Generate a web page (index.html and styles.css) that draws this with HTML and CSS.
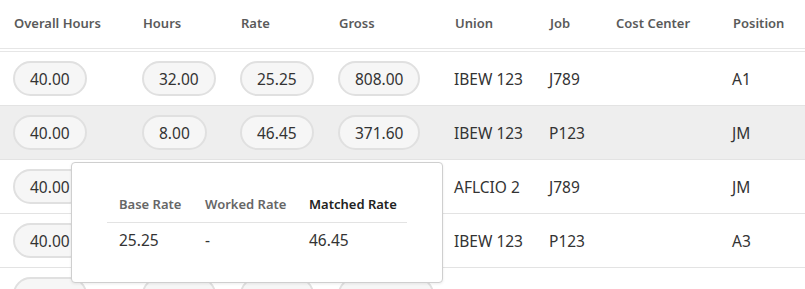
FILE: index.html
```html
<!DOCTYPE html>
<html>
<head>
<meta charset="utf-8">
<link rel="stylesheet" href="styles.css">
</head>
<body>
<div class="table">
  <div class="row head">
    <div class="cell">Overall Hours</div>
    <div class="cell">Hours</div>
    <div class="cell">Rate</div>
    <div class="cell">Gross</div>
    <div class="cell">Union</div>
    <div class="cell">Job</div>
    <div class="cell">Cost Center</div>
    <div class="cell">Position</div>
  </div>
  <div class="body">
    <div class="row">
      <div class="cell"><span class="pill">40.00</span></div>
      <div class="cell"><span class="pill">32.00</span></div>
      <div class="cell"><span class="pill">25.25</span></div>
      <div class="cell"><span class="pill">808.00</span></div>
      <div class="cell">IBEW 123</div>
      <div class="cell">J789</div>
      <div class="cell"></div>
      <div class="cell">A1</div>
    </div>
    <div class="row hover">
      <div class="cell"><span class="pill">40.00</span></div>
      <div class="cell"><span class="pill">8.00</span></div>
      <div class="cell"><span class="pill">46.45</span></div>
      <div class="cell"><span class="pill">371.60</span></div>
      <div class="cell">IBEW 123</div>
      <div class="cell">P123</div>
      <div class="cell"></div>
      <div class="cell">JM</div>
    </div>
    <div class="row">
      <div class="cell"><span class="pill">40.00</span></div>
      <div class="cell"><span class="pill">8.00</span></div>
      <div class="cell"><span class="pill">30.00</span></div>
      <div class="cell"><span class="pill">240.00</span></div>
      <div class="cell">AFLCIO 2</div>
      <div class="cell">J789</div>
      <div class="cell"></div>
      <div class="cell">JM</div>
    </div>
    <div class="row">
      <div class="cell"><span class="pill">40.00</span></div>
      <div class="cell"><span class="pill">8.00</span></div>
      <div class="cell"><span class="pill">25.25</span></div>
      <div class="cell"><span class="pill">202.00</span></div>
      <div class="cell">IBEW 123</div>
      <div class="cell">P123</div>
      <div class="cell"></div>
      <div class="cell">A3</div>
    </div>
    <div class="row">
      <div class="cell"><span class="pill">40.00</span></div>
      <div class="cell"><span class="pill">40.00</span></div>
      <div class="cell"><span class="pill">25.25</span></div>
      <div class="cell"><span class="pill">1,010.00</span></div>
      <div class="cell">IBEW 123</div>
      <div class="cell">J789</div>
      <div class="cell"></div>
      <div class="cell">Lead</div>
    </div>
  </div>
  <div class="tooltip">
    <div class="tt-grid">
      <div class="tt-h">Base Rate</div>
      <div class="tt-h">Worked Rate</div>
      <div class="tt-h strong">Matched Rate</div>
      <div class="tt-v">25.25</div>
      <div class="tt-v">-</div>
      <div class="tt-v">46.45</div>
    </div>
  </div>
</div>
</body>
</html>
```
FILE: styles.css
```css
html, body {
  margin: 0;
  padding: 0;
  background: #fff;
}
body {
  font-family: "Noto Sans", "Liberation Sans", sans-serif;
  color: #333;
  overflow: hidden;
}
.table {
  position: relative;
  width: 805px;
}
.row {
  display: grid;
  grid-template-columns: 129px 98px 98px 116px 95px 66px 117px 1fr;
  padding-left: 13px;
  align-items: center;
  height: 53px;
  border-bottom: 1px solid #e3e3e3;
  font-size: 15.5px;
  color: #333;
  white-space: nowrap;
}
.row.head {
  height: 46px;
  padding-bottom: 2px;
  font-size: 13px;
  font-weight: 600;
  color: #5a5a5a;
  border-bottom: 1px solid #e6e6e6;
}
.row.head .cell {
  padding-left: 1px;
}
.body {
  margin-top: 2px;
  border-top: 1px solid #e6e6e6;
}
.row.hover {
  background: #eeeeee;
}
.pill {
  display: inline-block;
  box-sizing: border-box;
  height: 35px;
  line-height: 30px;
  padding: 1px 15px 0;
  border: 2px solid #e0e0e0;
  border-radius: 18px;
  background: #f6f6f6;
  color: #333;
}
.tooltip {
  position: absolute;
  left: 71px;
  top: 162px;
  width: 372px;
  height: 121px;
  box-sizing: border-box;
  background: #fff;
  border: 1px solid #cfcfcf;
  border-radius: 4px;
  box-shadow: 0 1px 3px rgba(0,0,0,0.08);
  padding: 23px 35px;
}
.tt-grid {
  display: grid;
  grid-template-columns: 86px 104px 110px;
  white-space: nowrap;
}
.tt-h {
  font-size: 13px;
  font-weight: 600;
  color: #666;
  padding: 8px 12px;
  line-height: 20px;
  border-bottom: 1px solid #e3e3e3;
}
.tt-h.strong {
  color: #222;
}
.tt-v {
  font-size: 15.5px;
  color: #333;
  padding: 7px 12px;
  line-height: 20px;
}
```
